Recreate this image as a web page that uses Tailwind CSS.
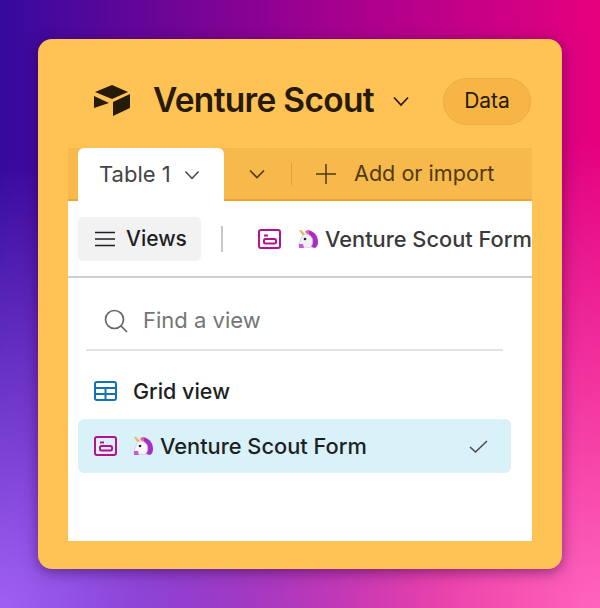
<!DOCTYPE html>
<html lang="en">
<head>
    <meta charset="UTF-8">
    <title>Venture Scout</title>
    <script src="https://cdn.jsdelivr.net/npm/@tailwindcss/browser@4"></script>
</head>
<body class="w-[600px] h-[608px] overflow-hidden font-['Inter',sans-serif] bg-[radial-gradient(circle_at_0%_100%,#a060f2_0%,rgba(160,96,242,0)_52%),radial-gradient(circle_at_100%_100%,#ff64bd_0%,rgba(255,100,189,0)_55%),linear-gradient(90deg,#350a9f_0%,#a3008f_55%,#e6007e_100%)]">

<div class="pt-[39px] pl-[38px]">
    <!-- Card -->
    <div class="w-[524px] h-[530px] bg-[#ffc255] rounded-[14px] shadow-[0_3px_14px_rgba(40,0,60,0.5)] px-[30px] pt-[29px]">

        <!-- Header -->
        <div class="h-[80px] flex items-center pl-[25px] pr-px pb-[14px]">
            <svg class="w-[38px] h-[34px] shrink-0" viewBox="0 0 38 34">
                <path d="M2 8 L19 1 L35 8 L19 15 Z" fill="#261a08"/>
                <path d="M20 18 L37 10 V24 L20 32 Z" fill="#261a08"/>
                <path d="M1 12 L16 19 L1 24 Z" fill="#261a08"/>
            </svg>
            <span class="ml-[22px] text-[33.500px] leading-none font-semibold tracking-[-0.7px] text-[#261a08] whitespace-nowrap">Venture Scout</span>
            <svg class="ml-[18px] w-[18px] h-[11px]" viewBox="0 0 18 11" fill="none" stroke="#261a08" stroke-width="1.700">
                <path d="M2 1.500 L9 9 L16 1.500"/>
            </svg>
            <div class="ml-auto w-[88px] h-[47px] rounded-full bg-[#f6b544] border border-[#eeab3e] flex items-center justify-center text-[21px] text-[#261a08]">Data</div>
        </div>

        <!-- Tabs -->
        <div class="h-[53px] bg-[#f7b84c] border-b-2 border-[#eba42f] pl-[10px] flex items-start">
            <div class="w-[146px] h-[53px] bg-white rounded-t-[6px] flex items-center pl-[21px] text-[#444]">
                <span class="text-[22px]">Table 1</span>
                <svg class="ml-[13px] w-[16px] h-[10px]" viewBox="0 0 16 10" fill="none" stroke="#444" stroke-width="1.500">
                    <path d="M1.500 1.500 L8 8.500 L14.500 1.500"/>
                </svg>
            </div>
            <div class="h-[51px] flex items-center text-[#4f3a12]">
                <svg class="ml-[25px] w-[16px] h-[10px]" viewBox="0 0 16 10" fill="none" stroke="#4f3a12" stroke-width="1.600">
                    <path d="M1 1.500 L8 8.500 L15 1.500"/>
                </svg>
                <div class="ml-[26px] w-px h-[22px] bg-[#d9a347]"></div>
                <svg class="ml-[23px] w-[22px] h-[22px]" viewBox="0 0 22 22" fill="none" stroke="#4f3a12" stroke-width="1.500">
                    <path d="M11 1 V21 M1 11 H21"/>
                </svg>
                <span class="ml-[17px] text-[21.600px] whitespace-nowrap">Add or import</span>
            </div>
        </div>

        <!-- Panel -->
        <div class="h-[340px] bg-white overflow-hidden">
            <!-- Toolbar -->
            <div class="h-[77px] border-b-2 border-[#cfcfcf] pl-[10px] pt-[16px] flex items-start whitespace-nowrap overflow-hidden">
                <div class="w-[123px] h-[44px] shrink-0 rounded-[5px] bg-[#f2f2f2] flex items-center pl-[17px] text-[#1d1f25]">
                    <svg class="w-[20px] h-[16px]" viewBox="0 0 20 16" fill="none" stroke="#1d1f25" stroke-width="1.500">
                        <path d="M0 1.500 H20 M0 8 H20 M0 14.500 H20"/>
                    </svg>
                    <span class="ml-[11px] text-[21px] font-medium">Views</span>
                </div>
                <div class="ml-[20px] mt-[9px] w-[2px] h-[26px] shrink-0 bg-[#c8c8c8]"></div>
                <svg class="ml-[35px] mt-[12px] w-[23px] h-[20px] shrink-0" viewBox="0 0 23 20" fill="none" stroke="#b8108c" stroke-width="2">
                    <rect x="1" y="1" width="21" height="18" rx="2"/>
                    <path d="M6 6.500 H10"/>
                    <rect x="6" y="10" width="12" height="4.500" rx="1.500"/>
                </svg>
                <svg class="ml-[17px] mt-[12px] w-[21px] h-[21px] shrink-0" viewBox="0 0 21 21">
                    <path d="M1 1 L3 1 L7 5 L5 7 Z" fill="#e8b84a"/>
                    <path d="M7 3 C9 0 13 1 14 3 L10 6 Z" fill="#e85fa0"/>
                    <path d="M11 2 C17 2 20 8 20 13 C20 16 19 18 17 19 L13 18 L11 6 Z" fill="#a52fc4"/>
                    <path d="M4 7 C7 4 12 5 14 9 C15 12 15 16 12 19 L9 18 C6 19 3 19 1 18 L1 15 Z" fill="#f4f1f6" stroke="#d5c8e4" stroke-width="0.800"/>
                    <path d="M1 15 L5 15 L6 19 L1 19 Z" fill="#c05cd8"/>
                    <circle cx="7" cy="10" r="1.300" fill="#222"/>
                </svg>
                <span class="ml-[6px] mt-[10px] text-[21.800px] leading-[24px] font-medium text-[#3a3a3a]">Venture Scout Form</span>
            </div>

            <!-- Search -->
            <div class="ml-[18px] mr-[29px] h-[73px] border-b-2 border-[#e3e3e3] flex items-center pl-[18px] pt-[14px]">
                <svg class="w-[24px] h-[24px]" viewBox="0 0 24 24" fill="none" stroke="#666" stroke-width="1.700">
                    <circle cx="10.500" cy="10.500" r="9"/>
                    <path d="M17 17 L23 23"/>
                </svg>
                <span class="ml-[15px] text-[22px] text-[#757575]">Find a view</span>
            </div>

            <!-- View list -->
            <div class="pl-[10px] pr-[21px] pt-[12px]">
                <div class="h-[56px] flex items-center pl-[16px]">
                    <svg class="w-[23px] h-[20px]" viewBox="0 0 23 20" fill="none" stroke="#1272b5" stroke-width="2">
                        <rect x="1" y="1" width="21" height="18" rx="2"/>
                        <path d="M1 7 H22 M1 13 H22 M11.500 7 V19"/>
                    </svg>
                    <span class="ml-[16px] text-[21.500px] font-medium text-[#1d1f25]">Grid view</span>
                </div>
                <div class="h-[54px] rounded-[6px] bg-[#d9f1f8] flex items-center pl-[16px] pr-[23px]">
                    <svg class="w-[23px] h-[20px] shrink-0" viewBox="0 0 23 20" fill="none" stroke="#b8108c" stroke-width="2">
                        <rect x="1" y="1" width="21" height="18" rx="2"/>
                        <path d="M6 6.500 H10"/>
                        <rect x="6" y="10" width="12" height="4.500" rx="1.500"/>
                    </svg>
                    <svg class="ml-[16px] w-[21px] h-[21px] shrink-0" viewBox="0 0 21 21">
                        <path d="M1 1 L3 1 L7 5 L5 7 Z" fill="#e8b84a"/>
                        <path d="M7 3 C9 0 13 1 14 3 L10 6 Z" fill="#e85fa0"/>
                        <path d="M11 2 C17 2 20 8 20 13 C20 16 19 18 17 19 L13 18 L11 6 Z" fill="#a52fc4"/>
                        <path d="M4 7 C7 4 12 5 14 9 C15 12 15 16 12 19 L9 18 C6 19 3 19 1 18 L1 15 Z" fill="#f8f6fa" stroke="#d5c8e4" stroke-width="0.800"/>
                        <path d="M1 15 L5 15 L6 19 L1 19 Z" fill="#c05cd8"/>
                        <circle cx="7" cy="10" r="1.300" fill="#222"/>
                    </svg>
                    <span class="ml-[6px] text-[21.800px] font-medium text-[#1d1f25] whitespace-nowrap">Venture Scout Form</span>
                    <svg class="ml-auto w-[19px] h-[13px]" viewBox="0 0 19 13" fill="none" stroke="#4a4a4a" stroke-width="1.500">
                        <path d="M1 7 L6.500 12 L18 1"/>
                    </svg>
                </div>
            </div>
        </div>
    </div>
</div>

</body>
</html>
